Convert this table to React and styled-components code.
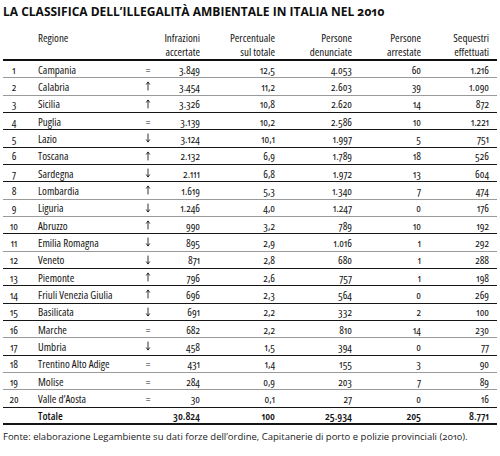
import React from "react";
import styled, { createGlobalStyle, css } from "styled-components";

const GlobalStyle = createGlobalStyle`
  html, body { margin: 0; padding: 0; background: #fff; }
  body {
    font-family: "Open Sans", "Noto Sans", "Liberation Sans", sans-serif;
    color: #141414;
    -webkit-font-smoothing: antialiased;
  }
`;

const Page = styled.main`
  width: 500px;
  padding: 0 3px;
  box-sizing: border-box;
  font-stretch: 87%;
  font-feature-settings: "onum" 1, "pnum" 1;
`;

const Title = styled.h1`
  margin: 0;
  padding-top: 4px;
  font-size: 12px;
  line-height: 16px;
  font-weight: 700;
  font-stretch: 92%;
  white-space: nowrap;
  color: #0e0e0e;
`;

const columns = "22px 115px 16px 44px 75px 77px 69px 1fr";

const HeaderRow = styled.div`
  display: grid;
  grid-template-columns: ${columns};
  padding: 11px 8px 0 0;
  border-bottom: 2px solid #111;
  font-size: 11px;
  line-height: 14px;
`;

const HeadCell = styled.div`
  text-align: ${(p) => (p.$left ? "left" : "right")};
  padding-left: ${(p) => (p.$left ? "13px" : "0")};
  white-space: nowrap;
`;

const HeadLine = styled.span`
  display: block;
  height: 14px;
`;

const BodyRow = styled.div`
  display: grid;
  grid-template-columns: ${columns};
  align-items: center;
  height: 17.33px;
  box-sizing: border-box;
  padding-right: 8px;
  font-size: 11px;
  line-height: 13px;
  border-bottom: 1px solid ${(p) => (p.$rule === "light" ? "#9a9a9a" : "#161616")};
  ${(p) =>
    p.$total &&
    css`
      font-weight: 600;
      border-bottom-width: 2px;
    `}
`;

const Rank = styled.div`
  text-align: center;
`;

const Region = styled.div`
  padding-left: 13px;
  white-space: nowrap;
`;

const TrendCell = styled.div`
  display: flex;
  justify-content: center;
  align-items: center;
  height: 100%;
`;

const Num = styled.div`
  text-align: right;
  white-space: nowrap;
`;

const Equal = styled.span`
  font-size: 11px;
  line-height: 1;
`;

const Note = styled.p`
  margin: 5px 0 0;
  font-size: 9.5px;
  line-height: 14px;
  font-stretch: 92%;
  white-space: nowrap;
  color: #1a1a1a;
`;

function Arrow({ dir }) {
  const up = dir === "up";
  return (
    <svg width="6" height="10" viewBox="0 0 6 10" aria-hidden="true">
      <g
        stroke="#1a1a1a"
        strokeWidth="0.9"
        fill="none"
        strokeLinecap="round"
        transform={up ? undefined : "rotate(180 3 5)"}
      >
        <line x1="3" y1="1.2" x2="3" y2="9" />
        <path d="M1.4 3.2 L3 1 L4.6 3.2" />
      </g>
    </svg>
  );
}

function Trend({ t }) {
  if (t === "=") return <Equal>=</Equal>;
  return <Arrow dir={t === "u" ? "up" : "down"} />;
}

const rows = [
  [1, "Campania", "=", "3.849", "12,5", "4.053", "60", "1.216", "light"],
  [2, "Calabria", "u", "3.454", "11,2", "2.603", "39", "1.090", "light"],
  [3, "Sicilia", "u", "3.326", "10,8", "2.620", "14", "872", "dark"],
  [4, "Puglia", "=", "3.139", "10,2", "2.586", "10", "1.221", "dark"],
  [5, "Lazio", "d", "3.124", "10,1", "1.997", "5", "751", "dark"],
  [6, "Toscana", "u", "2.132", "6,9", "1.789", "18", "526", "dark"],
  [7, "Sardegna", "d", "2.111", "6,8", "1.972", "13", "604", "dark"],
  [8, "Lombardia", "u", "1.619", "5,3", "1.340", "7", "474", "light"],
  [9, "Liguria", "d", "1.246", "4,0", "1.247", "0", "176", "light"],
  [10, "Abruzzo", "u", "990", "3,2", "789", "10", "192", "dark"],
  [11, "Emilia Romagna", "d", "895", "2,9", "1.016", "1", "292", "light"],
  [12, "Veneto", "d", "871", "2,8", "680", "1", "288", "dark"],
  [13, "Piemonte", "u", "796", "2,6", "757", "1", "198", "dark"],
  [14, "Friuli Venezia Giulia", "u", "696", "2,3", "564", "0", "269", "dark"],
  [15, "Basilicata", "d", "691", "2,2", "332", "2", "100", "dark"],
  [16, "Marche", "=", "682", "2,2", "810", "14", "230", "light"],
  [17, "Umbria", "d", "458", "1,5", "394", "0", "77", "dark"],
  [18, "Trentino Alto Adige", "=", "431", "1,4", "155", "3", "90", "light"],
  [19, "Molise", "=", "284", "0,9", "203", "7", "89", "light"],
  [20, "Valle d’Aosta", "=", "30", "0,1", "27", "0", "16", "dark"],
];

const heads = [
  ["Infrazioni", "accertate"],
  ["Percentuale", "sul totale"],
  ["Persone", "denunciate"],
  ["Persone", "arrestate"],
  ["Sequestri", "effettuati"],
];

export default function App() {
  return (
    <Page>
      <GlobalStyle />
      <Title>LA CLASSIFICA DELL’ILLEGALITÀ AMBIENTALE IN ITALIA NEL 2010</Title>
      <HeaderRow>
        <div />
        <HeadCell $left>Regione</HeadCell>
        <div />
        {heads.map(([a, b]) => (
          <HeadCell key={a + b}>
            <HeadLine>{a}</HeadLine>
            <HeadLine>{b}</HeadLine>
          </HeadCell>
        ))}
      </HeaderRow>
      {rows.map(([n, name, t, inf, pct, den, arr, seq, rule]) => (
        <BodyRow key={n} $rule={rule}>
          <Rank>{n}</Rank>
          <Region>{name}</Region>
          <TrendCell><Trend t={t} /></TrendCell>
          <Num>{inf}</Num>
          <Num>{pct}</Num>
          <Num>{den}</Num>
          <Num>{arr}</Num>
          <Num>{seq}</Num>
        </BodyRow>
      ))}
      <BodyRow $total>
        <Rank />
        <Region>Totale</Region>
        <TrendCell />
        <Num>30.824</Num>
        <Num>100</Num>
        <Num>25.934</Num>
        <Num>205</Num>
        <Num>8.771</Num>
      </BodyRow>
      <Note>
        Fonte: elaborazione Legambiente su dati forze dell’ordine, Capitanerie di porto e polizie provinciali (2010).
      </Note>
    </Page>
  );
}
